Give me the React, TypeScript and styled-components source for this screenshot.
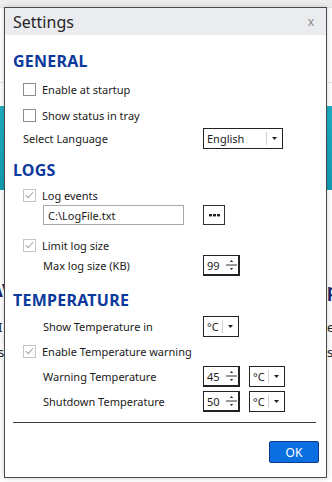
import React from 'react'
import styled, { createGlobalStyle } from 'styled-components'

const GlobalStyle = createGlobalStyle`
  html, body {
    margin: 0;
    padding: 0;
    background: #ffffff;
  }
  body {
    font-family: "Noto Sans", "Open Sans", sans-serif;
    color: #1a1a1a;
  }
`

const Page = styled.div`
  position: relative;
  width: 332px;
  height: 482px;
  overflow: hidden;
  background: #fff;
`

const TopStrip = styled.div`
  height: 7px;
  background: #eeeeef;
  border-bottom: 1px solid #e2e2e2;
`

const FaintLine = styled.div<{ $mt: number }>`
  height: 1px;
  margin-top: ${(p) => p.$mt}px;
  background: #e6e6e6;
`

const Banner = styled.div`
  height: 84px;
  margin-top: 23px;
  background: linear-gradient(180deg, #1fb0c4 0%, #139db3 100%);
`

const BackText = styled.div`
  margin-top: 89px;
  display: flex;
  justify-content: space-between;
  font-family: "Noto Sans", sans-serif;
  color: #222;
`

const BackCol = styled.div<{ $right?: boolean }>`
  display: flex;
  flex-direction: column;
  gap: 9px;
  margin-left: ${(p) => (p.$right ? '0' : '-9px')};
  margin-right: ${(p) => (p.$right ? '-55px' : '0')};
  width: 60px;
  font-size: 13px;

  h4 {
    margin: 0 0 8px;
    font-size: 17px;
    color: #1d2a6b;
  }
  span {
    line-height: 16px;
  }
`

const Dialog = styled.div`
  position: absolute;
  left: 4px;
  top: 7px;
  width: 321px;
  height: 469px;
  border: 1px solid #4a4a4a;
  background: #fff;
  box-shadow: 0 0 6px rgba(0, 0, 0, 0.18);
  display: flex;
  flex-direction: column;
`

const TitleBar = styled.div`
  height: 27px;
  background: #eaecef;
  display: flex;
  align-items: center;
  justify-content: space-between;
  padding: 0 12px 0 8px;
  font-size: 16px;
  color: #262626;
`

const Close = styled.span`
  font-size: 12px;
  color: #8a8a8a;
`

const Body = styled.div`
  padding: 13px 10px 0 8px;
  display: flex;
  flex-direction: column;
`

const Heading = styled.div<{ $mt?: number }>`
  height: 26px;
  margin-top: ${(p) => p.$mt ?? 0}px;
  display: flex;
  align-items: center;
  font-size: 16px;
  font-weight: 700;
  letter-spacing: 0.25px;
  color: #0b3a9c;
`

const Row = styled.div<{ $h: number; $mt?: number; $indent: number }>`
  height: ${(p) => p.$h}px;
  margin-top: ${(p) => p.$mt ?? 0}px;
  display: grid;
  grid-template-columns: ${(p) => 181 - p.$indent}px auto auto;
  column-gap: 9px;
  align-items: center;
  padding-left: ${(p) => p.$indent}px;
  font-size: 11px;
  justify-content: start;
`

const Label = styled.span`
  white-space: nowrap;
`

const Check = styled.label`
  display: flex;
  align-items: center;
  gap: 6px;
  white-space: nowrap;
`

const Box = styled.span<{ $on?: boolean }>`
  width: 11px;
  height: 11px;
  border: 1px solid ${(p) => (p.$on ? '#c4c4c4' : '#8c8c8c')};
  background: #fff;
  display: flex;
  align-items: center;
  justify-content: center;
`

const Select = styled.div<{ $w: number }>`
  width: ${(p) => p.$w}px;
  height: 21px;
  box-sizing: border-box;
  border: 1px solid #222;
  display: flex;
  align-items: center;
  font-size: 11px;
  background: #fff;
`

const SelectValue = styled.span`
  flex: 1;
  padding-left: 3px;
`

const Caret = styled.span`
  width: 15px;
  height: 13px;
  border-left: 1px solid #d0d0d0;
  display: flex;
  align-items: center;
  justify-content: center;
`

const TextInput = styled.div`
  width: 141px;
  height: 20px;
  box-sizing: border-box;
  border: 1px solid #a8a8a8;
  display: flex;
  align-items: center;
  padding-left: 4px;
  font-size: 11px;
`

const DotsButton = styled.div`
  width: 22px;
  height: 20px;
  box-sizing: border-box;
  border: 1px solid #333;
  display: flex;
  align-items: center;
  justify-content: center;
`

const Spinner = styled.div`
  width: 37px;
  height: 21px;
  box-sizing: border-box;
  border: 1px solid #222;
  border-right-width: 2px;
  border-bottom-width: 2px;
  display: flex;
  align-items: center;
  font-size: 11px;
`

const SpinValue = styled.span`
  flex: 1;
  padding-left: 3px;
`

const SpinArrows = styled.span`
  width: 13px;
  display: flex;
  align-items: center;
  justify-content: center;
`

const Separator = styled.div`
  height: 1px;
  background: #3c3c3c;
  margin-top: 10px;
`

const Footer = styled.div`
  display: flex;
  justify-content: flex-end;
  padding: 18px 7px 0 0;
`

const OkButton = styled.button`
  width: 50px;
  height: 22px;
  border: 1px solid #0a3a8e;
  border-radius: 2px;
  background: #0b6fe0;
  color: #fff;
  font-family: "Noto Sans", sans-serif;
  font-size: 12px;
  padding: 0;
`

const Tick = () => (
  <svg width="9" height="8" viewBox="0 0 9 8">
    <path d="M0.8 4.2 L3.3 6.6 L8.2 1" fill="none" stroke="#a9a9a9" strokeWidth="1.1" />
  </svg>
)

const Down = () => (
  <svg width="5" height="3" viewBox="0 0 5 3">
    <path d="M0 0 H5 L2.5 3 Z" fill="#222" />
  </svg>
)

const UpDown = () => (
  <svg width="11" height="16" viewBox="0 0 11 16">
    <path d="M3.8 5 L5.5 3 L7.2 5 Z" fill="#333" />
    <path d="M0 8 H11" stroke="#333" strokeWidth="1" />
    <path d="M3.8 11 L5.5 13 L7.2 11 Z" fill="#333" />
  </svg>
)

const Dots = () => (
  <svg width="11" height="3" viewBox="0 0 11 3">
    <rect x="0" y="0" width="3" height="2.4" fill="#222" />
    <rect x="4" y="0" width="3" height="2.4" fill="#222" />
    <rect x="8" y="0" width="3" height="2.4" fill="#222" />
  </svg>
)

const CheckItem = ({ on, text }: { on?: boolean; text: string }) => (
  <Check>
    <Box $on={on}>{on && <Tick />}</Box>
    {text}
  </Check>
)

const UnitSelect = () => (
  <Select $w={36}>
    <SelectValue>°C</SelectValue>
    <Caret>
      <Down />
    </Caret>
  </Select>
)

const NumberBox = ({ value }: { value: number }) => (
  <Spinner>
    <SpinValue>{value}</SpinValue>
    <SpinArrows>
      <UpDown />
    </SpinArrows>
  </Spinner>
)

const App = () => {
  return (
    <>
      <GlobalStyle />
      <Page>
        <TopStrip />
        <FaintLine $mt={74} />
        <Banner />
        <BackText>
          <BackCol>
            <h4>AV</h4>
            <span>xI</span>
            <span>xs</span>
          </BackCol>
          <BackCol $right>
            <h4>p</h4>
            <span>e</span>
            <span>s</span>
          </BackCol>
        </BackText>

        <Dialog>
          <TitleBar>
            <span>Settings</span>
            <Close>x</Close>
          </TitleBar>
          <Body>
            <Heading>GENERAL</Heading>
            <Row $h={26} $mt={2} $indent={10}>
              <CheckItem text="Enable at startup" />
            </Row>
            <Row $h={26} $indent={10}>
              <CheckItem text="Show status in tray" />
            </Row>
            <Row $h={21} $indent={10}>
              <Label>Select Language</Label>
              <Select $w={80}>
                <SelectValue>English</SelectValue>
                <Caret>
                  <Down />
                </Caret>
              </Select>
            </Row>

            <Heading $mt={8}>LOGS</Heading>
            <Row $h={20} $mt={2} $indent={10}>
              <CheckItem on text="Log events" />
            </Row>
            <Row $h={20} $indent={30}>
              <TextInput>C:\LogFile.txt</TextInput>
              <DotsButton>
                <Dots />
              </DotsButton>
            </Row>
            <Row $h={20} $mt={10} $indent={10}>
              <CheckItem on text="Limit log size" />
            </Row>
            <Row $h={21} $indent={30}>
              <Label>Max log size (KB)</Label>
              <NumberBox value={99} />
            </Row>

            <Heading $mt={11}>TEMPERATURE</Heading>
            <Row $h={21} $mt={3} $indent={30}>
              <Label>Show Temperature in</Label>
              <UnitSelect />
            </Row>
            <Row $h={20} $mt={4} $indent={10}>
              <CheckItem on text="Enable Temperature warning" />
            </Row>
            <Row $h={21} $mt={5} $indent={30}>
              <Label>Warning Temperature</Label>
              <NumberBox value={45} />
              <UnitSelect />
            </Row>
            <Row $h={21} $mt={4} $indent={30}>
              <Label>Shutdown Temperature</Label>
              <NumberBox value={50} />
              <UnitSelect />
            </Row>

            <Separator />
          </Body>
          <Footer>
            <OkButton>OK</OkButton>
          </Footer>
        </Dialog>
      </Page>
    </>
  )
}

export default App
